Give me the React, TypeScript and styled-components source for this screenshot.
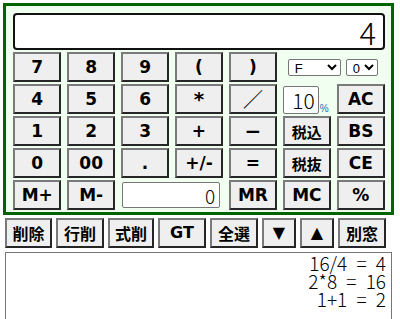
import styled, { createGlobalStyle } from "styled-components";

const GlobalStyle = createGlobalStyle`
  body {
    margin: 0;
    background: #fff;
    font-family: "DejaVu Sans", sans-serif;
  }
`;

const thinFont = `"Noto Sans CJK JP", "DejaVu Sans", sans-serif`;

const Page = styled.div`
  padding: 3px 0 0 3px;
  width: 400px;
  height: 319px;
  box-sizing: border-box;
  overflow: hidden;
`;

const Calc = styled.div`
  width: 391px;
  box-sizing: border-box;
  border: 3px solid #006400;
  background: #f0fff0;
  padding: 7px 6px 2px 7px;
`;

const Display = styled.div`
  height: 37px;
  box-sizing: border-box;
  border: 2px solid #111;
  border-radius: 4px;
  background: #fff;
  margin-bottom: 2px;
  padding: 0 7px;
  display: flex;
  align-items: center;
  justify-content: flex-end;
  font-family: ${thinFont};
  font-weight: 300;
  font-size: 31px;
  color: #000;
`;

const Keys = styled.div`
  display: grid;
  grid-template-columns: repeat(7, 1fr);
  grid-auto-rows: 30px;
  column-gap: 5.5px;
  row-gap: 2px;
`;

const Key = styled.button<{ $jp?: boolean; $size?: number; $thin?: boolean }>`
  margin: 0;
  padding: 0;
  box-sizing: border-box;
  border: 2px solid;
  border-color: #7a7a7a #262626 #262626 #7a7a7a;
  background: #efefef;
  color: #000;
  font-family: ${(p) =>
    p.$jp ? `"Noto Sans CJK JP", sans-serif` : `"DejaVu Sans", sans-serif`};
  font-weight: ${(p) => (p.$thin ? 400 : 700)};
  font-size: ${(p) => (p.$size ? p.$size : p.$jp ? 15 : 17)}px;
  line-height: 1;
  display: flex;
  align-items: center;
  justify-content: center;
`;

const SelectCell = styled.div`
  grid-column: 6 / 8;
  display: flex;
  align-items: center;
  gap: 5px;
  padding-left: 5px;
`;

const Select = styled.select<{ $w: number }>`
  width: ${(p) => p.$w}px;
  height: 17px;
  box-sizing: border-box;
  font-family: "Liberation Sans", sans-serif;
  font-size: 13px;
  padding: 0 0 0 2px;
  border: 1px solid #767676;
  border-radius: 2px;
  background: #fff;
`;

const RateCell = styled.div`
  display: flex;
  align-items: flex-end;
`;

const RateInput = styled.div`
  width: 36px;
  height: 28px;
  box-sizing: border-box;
  border: 1px solid #767676;
  border-radius: 2px;
  background: #fff;
  display: flex;
  align-items: center;
  justify-content: flex-end;
  padding-right: 3px;
  font-family: ${thinFont};
  font-weight: 300;
  font-size: 21px;
`;

const Percent = styled.span`
  font-family: "Liberation Sans", sans-serif;
  font-size: 10px;
  color: #2a6fb0;
  margin-left: 1px;
  line-height: 1;
`;

const MemoryInput = styled.div`
  grid-column: 3 / 5;
  align-self: center;
  height: 26px;
  margin: 0 3px 0 1px;
  box-sizing: border-box;
  border: 1px solid #767676;
  border-radius: 2px;
  background: #fff;
  display: flex;
  align-items: center;
  justify-content: flex-end;
  padding-right: 4px;
  font-family: ${thinFont};
  font-weight: 300;
  font-size: 19px;
`;

const Toolbar = styled.div`
  display: flex;
  gap: 4px;
  margin: 3px 0 0 2px;
`;

const ToolButton = styled(Key)<{ $w: number }>`
  width: ${(p) => p.$w}px;
  height: 30px;
  font-size: ${(p) => (p.$jp ? "16px" : "16px")};
`;

const History = styled.div`
  margin: 4px 0 0 2px;
  width: 387px;
  height: 80px;
  box-sizing: border-box;
  border: 1px solid #767676;
  padding: 1px 5px 0 0;
  text-align: right;
  white-space: pre;
  font-family: ${thinFont};
  font-weight: 300;
  font-size: 19px;
  line-height: 18px;
  word-spacing: 5px;
  color: #000;
`;

const topKeys = ["7", "8", "9", "(", ")"];

const history = ["16/4 = 4", "2*8 = 16", "1+1 = 2"];

const tools: { label: string; w: number; jp?: boolean }[] = [
  { label: "削除", w: 47, jp: true },
  { label: "行削", w: 48, jp: true },
  { label: "式削", w: 46, jp: true },
  { label: "GT", w: 48 },
  { label: "全選", w: 48, jp: true },
  { label: "▼", w: 34 },
  { label: "▲", w: 34 },
  { label: "別窓", w: 48, jp: true },
];

export default function App() {
  return (
    <Page>
      <GlobalStyle />
      <Calc>
        <Display>4</Display>
        <Keys>
          {topKeys.map((k) => (
            <Key key={k}>{k}</Key>
          ))}
          <SelectCell>
            <Select $w={53} defaultValue="F">
              <option>F</option>
            </Select>
            <Select $w={32} defaultValue="0">
              <option>0</option>
            </Select>
          </SelectCell>

          <Key>4</Key>
          <Key>5</Key>
          <Key>6</Key>
          <Key $size={20}>*</Key>
          <Key $jp $thin $size={20}>
            ／
          </Key>
          <RateCell>
            <RateInput>10</RateInput>
            <Percent>%</Percent>
          </RateCell>
          <Key>AC</Key>

          <Key>1</Key>
          <Key>2</Key>
          <Key>3</Key>
          <Key>+</Key>
          <Key $size={20}>−</Key>
          <Key $jp>税込</Key>
          <Key>BS</Key>

          <Key>0</Key>
          <Key>00</Key>
          <Key>.</Key>
          <Key>+/-</Key>
          <Key>=</Key>
          <Key $jp>税抜</Key>
          <Key>CE</Key>

          <Key>M+</Key>
          <Key>M-</Key>
          <MemoryInput>0</MemoryInput>
          <Key>MR</Key>
          <Key>MC</Key>
          <Key>%</Key>
        </Keys>
      </Calc>
      <Toolbar>
        {tools.map((t) => (
          <ToolButton key={t.label} $w={t.w} $jp={t.jp}>
            {t.label}
          </ToolButton>
        ))}
      </Toolbar>
      <History>{history.join("\n")}</History>
    </Page>
  );
}
